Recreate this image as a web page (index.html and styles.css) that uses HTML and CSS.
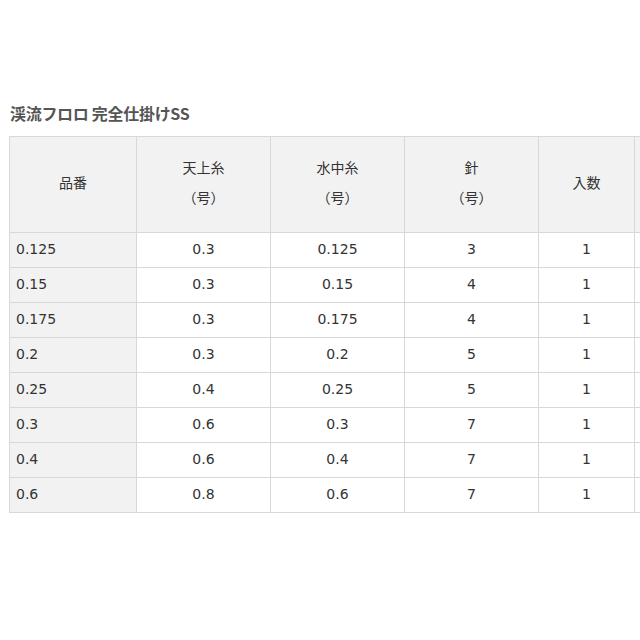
FILE: index.html
```html
<!DOCTYPE html>
<html lang="ja">
<head>
<meta charset="utf-8">
<link rel="stylesheet" href="styles.css">
</head>
<body>
<div class="page">
  <h2 class="title">渓流フロロ 完全仕掛けSS</h2>
  <div class="table-wrap">
    <table class="spec">
      <colgroup>
        <col class="c1"><col class="c2"><col class="c3"><col class="c4"><col class="c5"><col class="c6">
      </colgroup>
      <thead>
        <tr>
          <th>品番</th>
          <th>天上糸<br>（号）</th>
          <th>水中糸<br>（号）</th>
          <th>針<br>（号）</th>
          <th>入数</th>
          <th></th>
        </tr>
      </thead>
      <tbody>
        <tr><td class="name">0.125</td><td>0.3</td><td>0.125</td><td>3</td><td>1</td><td></td></tr>
        <tr><td class="name">0.15</td><td>0.3</td><td>0.15</td><td>4</td><td>1</td><td></td></tr>
        <tr><td class="name">0.175</td><td>0.3</td><td>0.175</td><td>4</td><td>1</td><td></td></tr>
        <tr><td class="name">0.2</td><td>0.3</td><td>0.2</td><td>5</td><td>1</td><td></td></tr>
        <tr><td class="name">0.25</td><td>0.4</td><td>0.25</td><td>5</td><td>1</td><td></td></tr>
        <tr><td class="name">0.3</td><td>0.6</td><td>0.3</td><td>7</td><td>1</td><td></td></tr>
        <tr><td class="name">0.4</td><td>0.6</td><td>0.4</td><td>7</td><td>1</td><td></td></tr>
        <tr><td class="name">0.6</td><td>0.8</td><td>0.6</td><td>7</td><td>1</td><td></td></tr>
      </tbody>
    </table>
  </div>
</div>
</body>
</html>
```
FILE: styles.css
```css
html, body {
  margin: 0;
  padding: 0;
  background: #fff;
  overflow: hidden;
}
.page {
  padding: 102px 0 0 9px;
  font-family: "DejaVu Sans", "Noto Sans CJK JP", sans-serif;
  color: #333;
}
.title {
  margin: 0 0 12px 1px;
  font-family: "Noto Sans CJK JP", sans-serif;
  font-size: 16px;
  line-height: 22px;
  font-weight: 700;
  color: #555;
  letter-spacing: -0.3px;
}
.table-wrap {
  width: 631px;
  overflow: hidden;
}
.spec {
  border-collapse: collapse;
  table-layout: fixed;
  width: 726px;
  font-size: 14px;
}
.c1 { width: 127px; }
.c2 { width: 134px; }
.c3 { width: 134px; }
.c4 { width: 134px; }
.c5 { width: 96px; }
.c6 { width: 100px; }
.spec th, .spec td {
  border: 1px solid #d8d8d8;
  padding: 0;
}
.spec th {
  height: 89px;
  padding-bottom: 6px;
  background: #f2f2f2;
  font-family: "Noto Sans CJK JP", sans-serif;
  font-weight: 400;
  font-size: 14px;
  line-height: 30px;
  text-align: center;
  vertical-align: middle;
  color: #333;
}
.spec td {
  height: 31px;
  padding-bottom: 3px;
  text-align: center;
  vertical-align: middle;
  background: #fff;
}
.spec td.name {
  background: #f2f2f2;
  text-align: left;
  padding-left: 6px;
}
```
